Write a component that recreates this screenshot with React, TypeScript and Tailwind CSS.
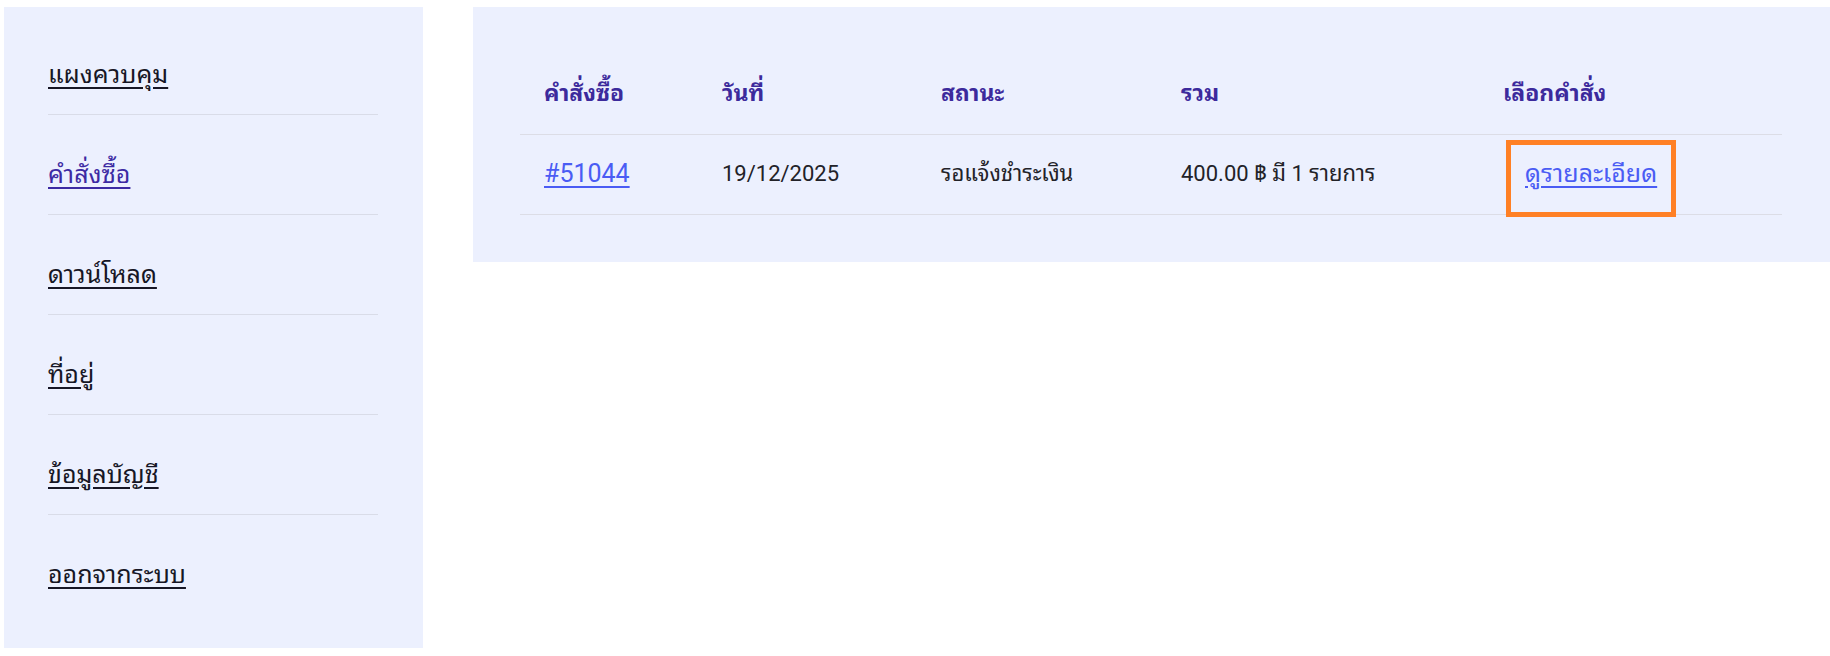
import React from "react";

const navItems = [
  { label: "แผงควบคุม", active: false },
  { label: "คำสั่งซื้อ", active: true },
  { label: "ดาวน์โหลด", active: false },
  { label: "ที่อยู่", active: false },
  { label: "ข้อมูลบัญชี", active: false },
  { label: "ออกจากระบบ", active: false },
];

const headers = ["คำสั่งซื้อ", "วันที่", "สถานะ", "รวม", "เลือกคำสั่ง"];

export default function App() {
  return (
    <div className="flex min-h-[656px] items-start bg-white pl-[4px] pt-[7px] font-[Roboto,'Noto_Sans_Thai_Looped',sans-serif]">
      <aside className="w-[419px] shrink-0 bg-[#ecf0fe] pl-[44px] pr-[45px] pt-[8px] pb-[34px]">
        <nav className="flex flex-col">
          {navItems.map((item, i) => (
            <div
              key={item.label}
              className={
                i < navItems.length - 1
                  ? "border-b border-[#d9dce8] pt-[40px] pb-[19px]"
                  : "pt-[40px] pb-[19px]"
              }
            >
              <a
                href="#"
                className={
                  item.active
                    ? "block w-fit text-[25px] leading-[40px] text-[#3c2aa3] underline underline-offset-[4px]"
                    : "block w-fit text-[25px] leading-[40px] text-[#161625] underline underline-offset-[4px]"
                }
              >
                {item.label}
              </a>
            </div>
          ))}
        </nav>
      </aside>

      <main className="ml-[50px] flex-1 bg-[#ecf0fe] pl-[47px] pr-[48px] pt-[47px] pb-[47px]">
        <table className="w-[1262px] table-fixed border-collapse text-left">
          <colgroup>
            <col className="w-[178px]" />
            <col className="w-[219px]" />
            <col className="w-[240px]" />
            <col className="w-[322px]" />
            <col className="w-[303px]" />
          </colgroup>
          <thead>
            <tr className="h-[80px] border-b border-[#dcdde6]">
              {headers.map((h) => (
                <th
                  key={h}
                  className="px-[24px] align-middle text-[23px] font-bold leading-[32px] text-[#3c2a9c]"
                >
                  {h}
                </th>
              ))}
            </tr>
          </thead>
          <tbody>
            <tr className="h-[80px] border-b border-[#dcdde6]">
              <td className="px-[24px] align-middle">
                <a
                  href="#"
                  className="text-[25px] leading-[32px] text-[#4a5cf4] underline underline-offset-[4px]"
                >
                  #51044
                </a>
              </td>
              <td className="px-[24px] align-middle text-[22px] leading-[32px] text-[#222228]">
                19/12/2025
              </td>
              <td className="px-[24px] align-middle text-[22px] leading-[32px] text-[#222228]">
                รอแจ้งชำระเงิน
              </td>
              <td className="px-[24px] align-middle text-[22px] leading-[32px] text-[#222228]">
                400.00 ฿ มี 1 รายการ
              </td>
              <td className="px-[24px] align-middle">
                <a
                  href="#"
                  className="relative ml-[22px] inline-block text-[25px] leading-[32px] text-[#4a5cf4] underline underline-offset-[4px]"
                >
                  ดูรายละเอียด
                  <span className="pointer-events-none absolute top-[-18px] right-[-19px] bottom-[-27px] left-[-19px] border-[5px] border-[#ff8025]" />
                </a>
              </td>
            </tr>
          </tbody>
        </table>
      </main>
    </div>
  );
}
